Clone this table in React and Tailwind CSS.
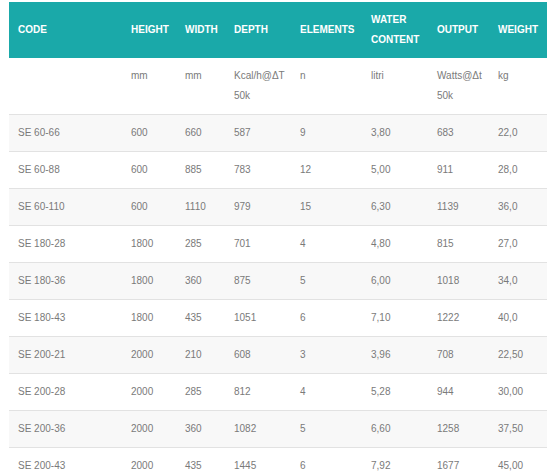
import React from 'react';

const headers = [
  'CODE',
  'HEIGHT',
  'WIDTH',
  'DEPTH',
  'ELEMENTS',
  ['WATER', 'CONTENT'],
  'OUTPUT',
  'WEIGHT',
];

const units = ['', 'mm', 'mm', 'Kcal/h@ΔT 50k', 'n', 'litri', 'Watts@Δt 50k', 'kg'];

const rows = [
  ['SE 60-66', '600', '660', '587', '9', '3,80', '683', '22,0'],
  ['SE 60-88', '600', '885', '783', '12', '5,00', '911', '28,0'],
  ['SE 60-110', '600', '1110', '979', '15', '6,30', '1139', '36,0'],
  ['SE 180-28', '1800', '285', '701', '4', '4,80', '815', '27,0'],
  ['SE 180-36', '1800', '360', '875', '5', '6,00', '1018', '34,0'],
  ['SE 180-43', '1800', '435', '1051', '6', '7,10', '1222', '40,0'],
  ['SE 200-21', '2000', '210', '608', '3', '3,96', '708', '22,50'],
  ['SE 200-28', '2000', '285', '812', '4', '5,28', '944', '30,00'],
  ['SE 200-36', '2000', '360', '1082', '5', '6,60', '1258', '37,50'],
  ['SE 200-43', '2000', '435', '1445', '6', '7,92', '1677', '45,00'],
];

const colWidths = ['w-[113px]', 'w-[54px]', 'w-[49px]', 'w-[66px]', 'w-[71px]', 'w-[66px]', 'w-[61px]', 'w-[58px]'];

export default function App() {
  return (
    <div className="h-[476px] w-[547px] overflow-hidden bg-white pl-[9px] pt-[2px] font-['Liberation_Sans',Arial,sans-serif] text-[10px] leading-[20px]">
      <table className="w-[538px] table-fixed border-collapse text-left">
        <colgroup>
          {colWidths.map((w, i) => (
            <col key={i} className={w} />
          ))}
        </colgroup>
        <thead>
          <tr className="bg-[#1aa9a9] text-white">
            {headers.map((h, i) => (
              <th key={i} className="h-[56px] py-2 pl-[9px] pr-1 align-middle font-bold">
                {Array.isArray(h) ? (
                  <>
                    {h[0]}
                    <br />
                    {h[1]}
                  </>
                ) : (
                  h
                )}
              </th>
            ))}
          </tr>
        </thead>
        <tbody className="text-[#7a7a7a]">
          <tr>
            {units.map((u, i) => (
              <td key={i} className="py-2 pl-[9px] pr-1 align-top">
                {u}
              </td>
            ))}
          </tr>
          {rows.map((r, ri) => (
            <tr key={ri} className={`border-t border-[#e2e2e2] ${ri % 2 === 0 ? 'bg-[#f8f8f8]' : 'bg-white'}`}>
              {r.map((c, ci) => (
                <td key={ci} className="py-2 pl-[9px] pr-1 align-top">
                  {c}
                </td>
              ))}
            </tr>
          ))}
        </tbody>
      </table>
    </div>
  );
}
